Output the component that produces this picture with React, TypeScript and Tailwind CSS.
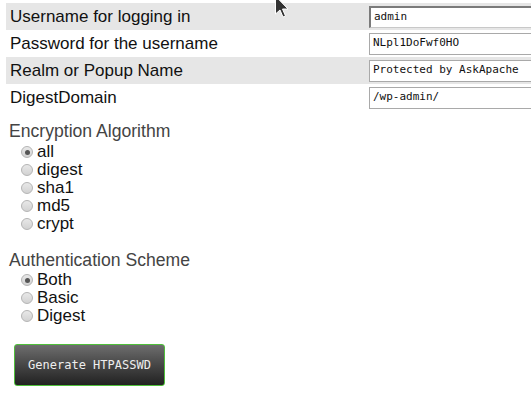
import React from 'react';

const fields = [
  { label: 'Username for logging in', value: 'admin', shade: true, focus: true },
  { label: 'Password for the username', value: 'NLpl1DoFwf0HO', shade: false },
  { label: 'Realm or Popup Name', value: 'Protected by AskApache', shade: true },
  { label: 'DigestDomain', value: '/wp-admin/', shade: false },
];

const Radio = ({ checked, label }: { checked?: boolean; label: string }) => (
  <div className="flex h-[18px] items-center pl-[12px]">
    <span className="flex h-[12px] w-[12px] shrink-0 items-center justify-center rounded-full border border-[#b4b4b4] bg-gradient-to-b from-[#e8e8e8] to-[#d2d2d2]">
      {checked && <span className="h-[5px] w-[5px] rounded-full bg-[#555]" />}
    </span>
    <span className="ml-[4px] text-[17px] leading-[18px] text-[#111]">{label}</span>
  </div>
);

export default function App() {
  return (
    <div
      className="relative h-[394px] w-[531px] overflow-hidden bg-white"
      style={{ fontFamily: '"Liberation Sans", Arial, sans-serif' }}
    >
      <div className="ml-[6px] pt-[3px]">
        {fields.map((f) => (
          <div
            key={f.label}
            className={`flex h-[27px] items-center ${f.shade ? 'bg-[#e6e6e6]' : 'bg-white'}`}
          >
            <div className="w-[363px] shrink-0 pl-[4px] text-[17px] text-[#111]">{f.label}</div>
            <div
              className={`flex h-[22px] w-[220px] shrink-0 items-center bg-white pl-[3px] text-[11px] text-[#111] ${
                f.focus
                  ? 'border-t-2 border-l-2 border-b border-r border-t-[#7a7a7a] border-l-[#7a7a7a] border-b-[#c8c8c8] border-r-[#c8c8c8]'
                  : 'border border-[#a9a9a9]'
              }`}
              style={{ fontFamily: '"DejaVu Sans Mono", monospace' }}
            >
              {f.value}
            </div>
          </div>
        ))}
      </div>

      <div className="pl-[9px]">
        <div className="mt-[10px] text-[17.6px] leading-[20px] text-[#444]">Encryption Algorithm</div>
        <div className="mt-[2px]">
          <Radio checked label="all" />
          <Radio label="digest" />
          <Radio label="sha1" />
          <Radio label="md5" />
          <Radio label="crypt" />
        </div>

        <div className="mt-[17px] text-[17.6px] leading-[20px] text-[#444]">Authentication Scheme</div>
        <div className="mt-[1px]">
          <Radio checked label="Both" />
          <Radio label="Basic" />
          <Radio label="Digest" />
        </div>
      </div>

      <div className="mt-[19px] pl-[14px]">
        <button
          className="flex h-[42px] w-[151px] items-center justify-center rounded-[3px] border border-[#4fbf3a] bg-gradient-to-b from-[#6e6e6e] to-[#222] text-[12px] text-[#eee]"
          style={{ fontFamily: '"DejaVu Sans Mono", monospace' }}
        >
          Generate HTPASSWD
        </button>
      </div>

      <svg
        className="absolute left-[274px] top-[-5px]"
        width="16"
        height="26"
        viewBox="0 0 16 26"
      >
        <path
          d="M1.5 1 L1.5 19 L6 15 L9 22 L11.5 21 L8.5 14 L14 14 Z"
          fill="#333"
          stroke="#fff"
          strokeWidth="1"
          strokeLinejoin="round"
        />
      </svg>
    </div>
  );
}
